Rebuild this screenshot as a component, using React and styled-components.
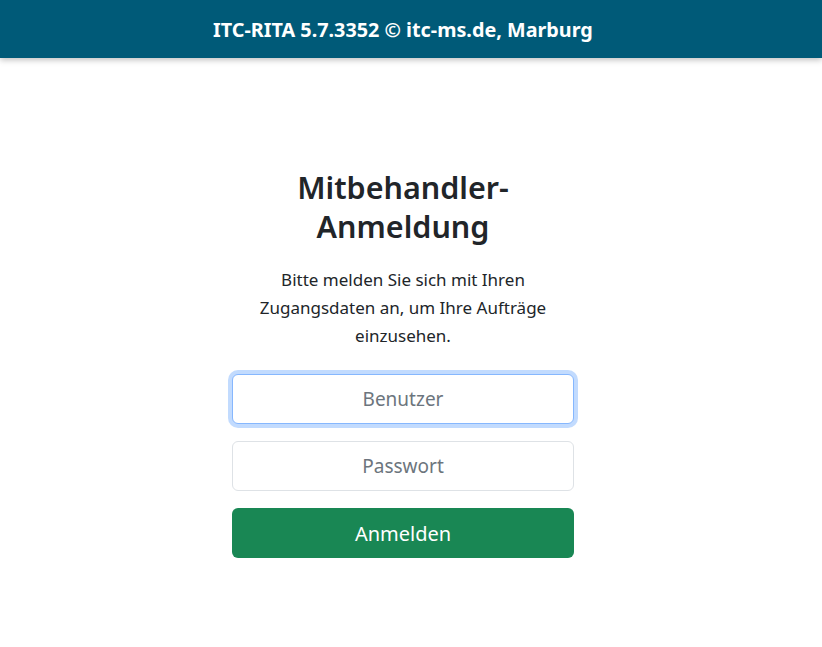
import React from "react";
import styled, { createGlobalStyle } from "styled-components";

const GlobalStyle = createGlobalStyle`
  html, body {
    margin: 0;
    padding: 0;
    background: #fff;
    color: #212529;
    font-family: "Segoe UI", "Noto Sans", "Open Sans", sans-serif;
  }
  * { box-sizing: border-box; }
`;

const Header = styled.header`
  height: 58px;
  background-color: #005a78;
  color: #fff;
  display: flex;
  justify-content: center;
  align-items: center;
  padding-right: 16px;
  font-size: 19.8px;
  font-weight: 700;
  box-shadow: 0 2px 6px rgba(0, 0, 0, 0.25);
`;

const Main = styled.main`
  display: flex;
  justify-content: center;
  padding: 110px 16px 0 0;
`;

const Card = styled.div`
  width: 342px;
  display: flex;
  flex-direction: column;
  align-items: center;

  h2 {
    width: 300px;
    margin: 0 0 20px;
    font-size: 30.5px;
    font-weight: 600;
    line-height: 39px;
    text-align: center;
  }

  p {
    width: 310px;
    margin: 0 0 24px;
    font-size: 17px;
    line-height: 28px;
    text-align: center;
  }
`;

const Form = styled.form`
  width: 100%;
  display: flex;
  flex-direction: column;
  gap: 17px;
`;

const Input = styled.input`
  width: 100%;
  height: 50px;
  padding: 8px 16px;
  font-family: inherit;
  font-size: 19px;
  text-align: center;
  color: #212529;
  border: 1px solid ${(p) => (p.$focused ? "#86b7fe" : "#dee2e6")};
  border-radius: 6px;
  outline: none;
  box-shadow: ${(p) =>
    p.$focused ? "0 0 0 4px rgba(13, 110, 253, 0.25)" : "none"};

  &::placeholder {
    color: #6c757d;
  }
`;

const Button = styled.button`
  width: 100%;
  height: 50px;
  border: 0;
  border-radius: 6px;
  background-color: #198754;
  color: #fff;
  font-family: inherit;
  font-size: 20px;
  cursor: pointer;
`;

export default function App() {
  return (
    <>
      <GlobalStyle />
      <Header>ITC-RITA 5.7.3352 © itc-ms.de, Marburg</Header>
      <Main>
        <Card>
          <h2>Mitbehandler-Anmeldung</h2>
          <p>
            Bitte melden Sie sich mit Ihren Zugangsdaten an, um Ihre Aufträge
            einzusehen.
          </p>
          <Form onSubmit={(e) => e.preventDefault()}>
            <Input type="text" placeholder="Benutzer" $focused />
            <Input type="password" placeholder="Passwort" />
            <Button type="submit">Anmelden</Button>
          </Form>
        </Card>
      </Main>
    </>
  );
}
